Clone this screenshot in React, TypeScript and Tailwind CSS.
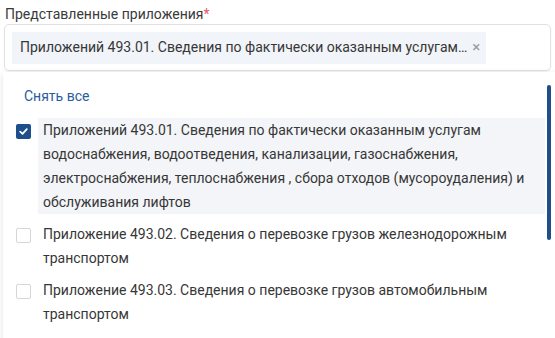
import React from "react";

const options = [
  {
    text: "Приложений 493.01. Сведения по фактически оказанным услугам водоснабжения, водоотведения, канализации, газоснабжения, электроснабжения, теплоснабжения , сбора отходов (мусороудаления) и обслуживания лифтов",
    checked: true,
  },
  {
    text: "Приложение 493.02. Сведения о перевозке грузов железнодорожным транспортом",
    checked: false,
  },
  {
    text: "Приложение 493.03. Сведения о перевозке грузов автомобильным транспортом",
    checked: false,
  },
];

const CheckBox: React.FC<{ checked: boolean }> = ({ checked }) => {
  if (checked) {
    return (
      <div className="w-[15px] h-[15px] mt-[6px] shrink-0 rounded-[2px] bg-[#1f4e8c] flex items-center justify-center">
        <svg width="11" height="11" viewBox="0 0 10 10" fill="none">
          <path d="M2 5.2 L4.1 7.2 L8 2.9" stroke="white" strokeWidth="1.6" strokeLinecap="round" strokeLinejoin="round" />
        </svg>
      </div>
    );
  }
  return <div className="w-[15px] h-[15px] mt-[6px] shrink-0 rounded-[2px] border border-[#d6d6d6] bg-white" />;
};

export default function App() {
  return (
    <div className="relative w-[555px] h-[338px] bg-white overflow-hidden text-[#373737] font-['Roboto',sans-serif]">
      <div className="pl-[5px] pt-[4px] text-[14px] leading-[20px] text-[#3a3a3a]">
        Представленные приложения<span className="text-[#e8566b]">*</span>
      </div>

      <div className="mx-[4px] h-[47px] border border-[#e1e1e1] rounded-[5px] shadow-[0_1px_2px_rgba(0,0,0,0.06)] px-[7px] flex items-center">
        <div className="h-[32px] w-[474px] bg-[#f1f4f8] flex items-center pl-[8px] text-[14px] whitespace-nowrap overflow-hidden">
          <span>Приложений 493.01. Сведения по фактически оказанным услугам…</span>
          <span className="ml-[5px] text-[#9a9a9a] text-[15px] leading-none">×</span>
        </div>
      </div>

      <div className="absolute left-[3px] top-[72px] w-[560px] h-[300px] bg-white shadow-[0_2px_6px_rgba(0,0,0,0.12)]">
        <div className="pl-[21px] pt-[14px] text-[14px] leading-[20px] text-[#2a5d9b]">Снять все</div>
        <div className="absolute left-[544px] top-[13px] w-[4px] h-[155px] rounded-full bg-[#1e4f8a]" />
        <div className="mt-[12px] flex flex-col gap-[8px]">
          {options.map((o, i) => (
            <div key={i} className="flex items-start pl-[13px] gap-[7px]">
              <CheckBox checked={o.checked} />
              <div className={`w-[507px] pl-[5px] pr-[10px] text-[14px] leading-[24px] ${o.checked ? "bg-[#f3f5f8]" : ""}`}>
                {o.text}
              </div>
            </div>
          ))}
        </div>
      </div>
    </div>
  );
}
